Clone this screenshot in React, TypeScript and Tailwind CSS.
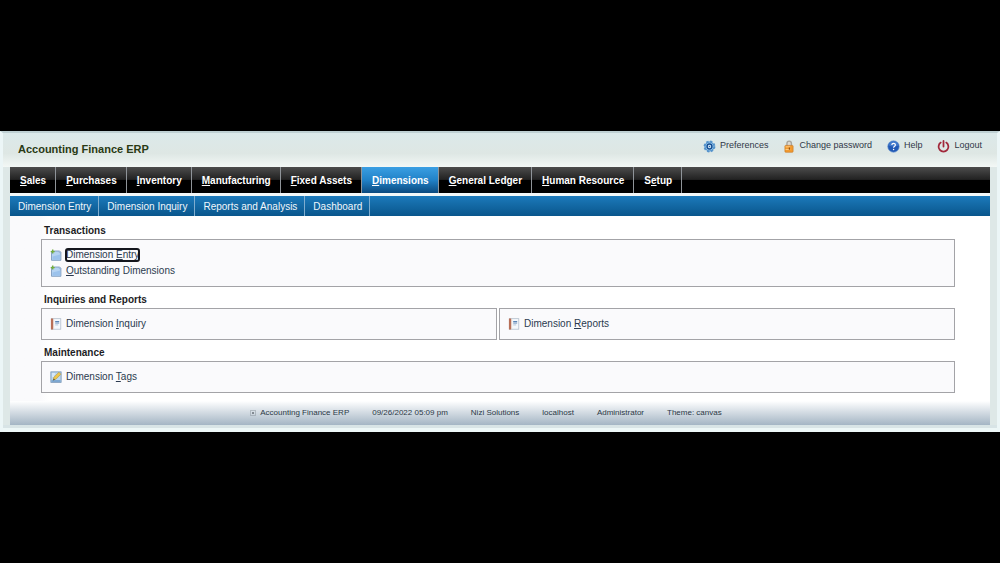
import type { ReactNode } from "react";

type LinkText = { before?: string; accessKey: string; after: string };

const tabs: LinkText[] = [
  { accessKey: "S", after: "ales" },
  { accessKey: "P", after: "urchases" },
  { accessKey: "I", after: "nventory" },
  { accessKey: "M", after: "anufacturing" },
  { accessKey: "F", after: "ixed Assets" },
  { accessKey: "D", after: "imensions" },
  { accessKey: "G", after: "eneral Ledger" },
  { accessKey: "H", after: "uman Resource" },
  { before: "S", accessKey: "e", after: "tup" },
];

const subTabs = ["Dimension Entry", "Dimension Inquiry", "Reports and Analysis", "Dashboard"];

const footerItems = ["09/26/2022 05:09 pm", "Nizi Solutions", "localhost", "Administrator", "Theme: canvas"];

function KeyLabel({ before = "", accessKey, after }: LinkText) {
  return (
    <>
      {before}
      <span className="underline">{accessKey}</span>
      {after}
    </>
  );
}

function GearIcon() {
  return (
    <svg viewBox="0 0 14 14" className="size-[13px]" aria-hidden="true">
      <circle cx="7" cy="7" r="5.5" fill="#8dbfe6" stroke="#5b97cd" strokeWidth="1.8" strokeDasharray="2.5 1.82" />
      <circle cx="7" cy="7" r="4.8" fill="#9ccbee" stroke="#3f82c2" strokeWidth="0.9" />
      <circle cx="7" cy="7" r="2.6" fill="#e3f1fa" stroke="#174f94" strokeWidth="1.6" />
      <circle cx="7" cy="7" r="0.9" fill="#2b6db1" />
    </svg>
  );
}

function LockIcon() {
  return (
    <svg viewBox="0 0 12 14" className="h-[13px] w-3" aria-hidden="true">
      <path d="M3.8 7V3.6a2.4 2.4 0 0 1 4.8 0V7" fill="#dcdad2" stroke="#a8a59d" strokeWidth="1.5" />
      <rect x="1.6" y="5.8" width="8.8" height="7.4" rx="0.8" fill="#f29a2e" stroke="#c97a25" strokeWidth="0.7" />
      <path d="M2.3 7.4h5M2.3 10.2h5" stroke="#ffd08a" strokeWidth="1" />
      <path d="M6.4 8v2.6" stroke="#8f4e12" strokeWidth="1.2" />
    </svg>
  );
}

function HelpIcon() {
  return (
    <svg viewBox="0 0 14 14" className="size-[13px]" aria-hidden="true">
      <circle cx="7" cy="7" r="6.2" fill="#2159b5" stroke="#6f9bd3" strokeWidth="0.7" />
      <path d="M2 6a5 5 0 0 1 10 0c-3 1.4-7 1.4-10 0z" fill="#4f87d6" opacity="0.7" />
      <path d="M5.2 5.4C5.2 3 9 3 9 5.3 9 6.8 7.1 6.7 7.1 8.4" fill="none" stroke="#fff" strokeWidth="1.3" />
      <circle cx="7.1" cy="10.3" r="0.8" fill="#fff" />
    </svg>
  );
}

function PowerIcon() {
  return (
    <svg viewBox="0 0 14 14" className="size-[13px]" aria-hidden="true">
      <path d="M4 2.8a5.3 5.3 0 1 0 6 0" fill="none" stroke="#a1283b" strokeWidth="1.9" strokeLinecap="round" />
      <path d="M7 1v6" stroke="#a1283b" strokeWidth="1.9" strokeLinecap="round" />
    </svg>
  );
}

function EntryIcon() {
  return (
    <svg viewBox="0 0 12 12" className="size-3 shrink-0" aria-hidden="true">
      <path d="M1.5 2h8.2l1.2 1.3v8H1.5z" fill="#b5d3f2" stroke="#7292b8" strokeWidth="0.8" />
      <path d="M2.5 7.5l7.7-2v5.2H2.5z" fill="#9bc2ec" />
      <path d="M9.3 2v1.6h1.6" fill="#e9f3fc" stroke="#7292b8" strokeWidth="0.5" />
      <path d="M2.7 0.6v4M0.7 2.6h4" stroke="#74ad3f" strokeWidth="1.4" />
    </svg>
  );
}

function ReportIcon() {
  return (
    <svg viewBox="0 0 12 12" className="size-3 shrink-0" aria-hidden="true">
      <rect x="1.5" y="0.7" width="9.3" height="10.5" fill="#f4f8fc" stroke="#aab7c6" strokeWidth="0.7" />
      <rect x="0.9" y="0.5" width="2.2" height="11" fill="#b76f57" />
      <path d="M3.6 0.8v10.4" stroke="#e1c9bd" strokeWidth="0.7" />
      <path d="M5.2 3.5h4M5.2 5h4" stroke="#5b84b5" strokeWidth="1" />
      <path d="M5.2 6.9h3" stroke="#a5bbd4" strokeWidth="0.8" />
    </svg>
  );
}

function EditIcon() {
  return (
    <svg viewBox="0 0 12 12" className="size-3 shrink-0" aria-hidden="true">
      <rect x="0.9" y="0.9" width="10.2" height="10.4" fill="#bcd8f1" stroke="#6b8cb0" strokeWidth="0.8" />
      <path d="M1.5 9.2h9v1.6h-9z" fill="#6f9dcb" />
      <path d="M3.2 9l0.7-2.8 5-5 2 2-5 5z" fill="#efc64b" stroke="#a98b35" strokeWidth="0.5" />
      <path d="M3 9.4l0.8-2 1.2 1.2z" fill="#3f4b3d" />
      <path d="M2 3h3M2 5h2" stroke="#fff" strokeWidth="0.8" />
    </svg>
  );
}

function ToolLink({ icon, children }: { icon: ReactNode; children: ReactNode }) {
  return (
    <a href="#" className="flex items-center gap-1">
      {icon}
      {children}
    </a>
  );
}

function MenuItem({ icon, focused = false, ...label }: LinkText & { icon: ReactNode; focused?: boolean }) {
  return (
    <li className="flex h-4 items-center gap-1">
      {icon}
      <a
        href="#"
        className={focused ? "rounded-xs leading-3 outline-2 -outline-offset-1 outline-[#14161d]" : "leading-3"}
      >
        <KeyLabel {...label} />
      </a>
    </li>
  );
}

function Box({ children }: { children: ReactNode }) {
  return <ul className="flex-1 border border-[#a3a3a7] bg-[#fafafc] px-2 py-[7px]">{children}</ul>;
}

function Section({ title, children }: { title: string; children: ReactNode }) {
  return (
    <section>
      <h2 className="pt-[5px] pl-[3px] leading-4 font-bold text-[#1d1d1f]">{title}</h2>
      <div className="flex gap-0.5">{children}</div>
    </section>
  );
}

export default function App() {
  return (
    <div className="flex min-h-screen items-center bg-black font-['Liberation_Sans',Arial,sans-serif] text-[10px] text-[#2b3a4f]">
      <div className="w-full border-x-3 border-t-2 border-[#ecf6f7] border-t-[#bfd0d3] bg-[#dee8e7] px-[7px]">
        <header className="-mx-[7px] flex h-[34px] items-center justify-between bg-linear-to-b from-[#dce9ea] via-[#dee7e4] via-60% to-[#f3f8f6] px-[15px]">
          <h1 className="pb-0.5 text-[11px] font-bold text-[#2a3a14]">Accounting Finance ERP</h1>
          <div className="flex gap-[15px] pb-2 text-[9px] text-[#303747]">
            <ToolLink icon={<GearIcon />}>Preferences</ToolLink>
            <ToolLink icon={<LockIcon />}>Change password</ToolLink>
            <ToolLink icon={<HelpIcon />}>Help</ToolLink>
            <ToolLink icon={<PowerIcon />}>Logout</ToolLink>
          </div>
        </header>

        <nav aria-label="Applications" className="flex h-[26px] bg-linear-to-b from-[#4d4d4d] via-[#222222] via-48% to-black to-50% font-bold text-white">
          {tabs.map((tab) => (
            <a
              key={tab.accessKey}
              href="#"
              className={
                tab.accessKey === "D"
                  ? "flex items-center border-r border-[#8f9499] bg-linear-to-b from-[#3a9fe3] via-[#2182c8] via-50% to-[#0b4a7f] pr-[9px] pl-2.5"
                  : "flex items-center border-r border-[#8f9499] pr-[9px] pl-2.5"
              }
            >
              <span>
                <KeyLabel {...tab} />
              </span>
            </a>
          ))}
        </nav>

        <nav aria-label="Dimensions" className="flex h-[23px] border-t-3 border-[#f3f8f8] bg-linear-to-b from-[#1c7abb] to-[#09568c] text-[#f0f7fc]">
          {subTabs.map((tab) => (
            <a key={tab} href="#" className="flex items-center border-r border-[#7fadcf] pr-[7px] pl-2">
              {tab}
            </a>
          ))}
        </nav>

        <main className="bg-linear-to-r from-[#fafafc] from-3% via-white via-4% to-white to-96% pt-0.5 pr-[35px] pb-2 pl-[31px]">
          <Section title="Transactions">
            <Box>
              <MenuItem icon={<EntryIcon />} before="Dimension " accessKey="E" after="ntry" focused />
              <MenuItem icon={<EntryIcon />} accessKey="O" after="utstanding Dimensions" />
            </Box>
          </Section>
          <Section title="Inquiries and Reports">
            <Box>
              <MenuItem icon={<ReportIcon />} before="Dimension " accessKey="I" after="nquiry" />
            </Box>
            <Box>
              <MenuItem icon={<ReportIcon />} before="Dimension " accessKey="R" after="eports" />
            </Box>
          </Section>
          <Section title="Maintenance">
            <Box>
              <MenuItem icon={<EditIcon />} before="Dimension " accessKey="T" after="ags" />
            </Box>
          </Section>
        </main>

        <footer className="flex h-6 items-center justify-center gap-[23px] bg-linear-to-b from-white to-[#a4b5c4] pr-7 text-[8px] text-[#2b3946]">
          <span className="flex items-center gap-1">
            <svg viewBox="0 0 6 6" className="size-1.5" aria-hidden="true">
              <rect x="0.5" y="0.5" width="5" height="5" fill="none" stroke="#8b949c" strokeDasharray="1 1" />
              <path d="M2 3h2M3 2v2" stroke="#555d66" strokeWidth="0.8" />
            </svg>
            Accounting Finance ERP
          </span>
          {footerItems.map((item) => (
            <span key={item}>{item}</span>
          ))}
        </footer>
        <div className="-mx-[7px] h-[7px] border-b-4 border-[#edf7f7] bg-[#d8e4e6]" />
      </div>
    </div>
  );
}
